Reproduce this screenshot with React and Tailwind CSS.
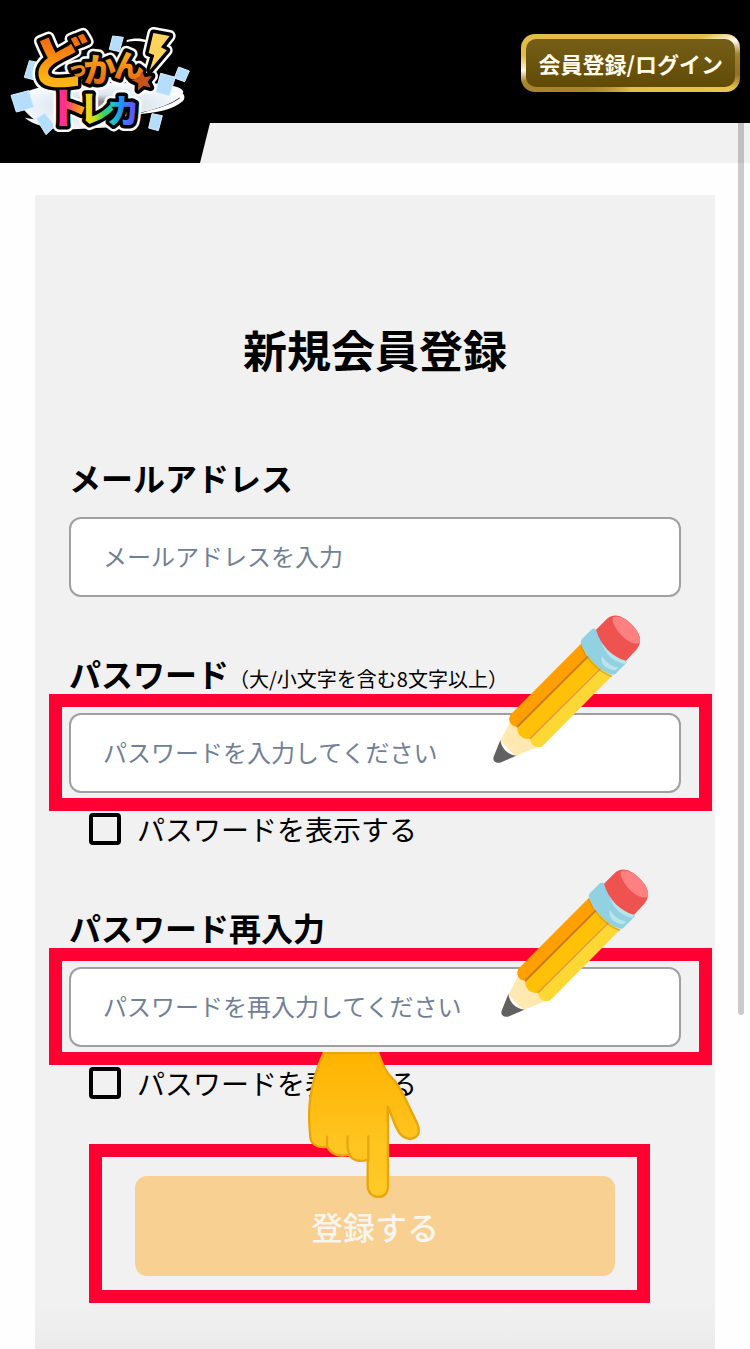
import { useState } from "react";

const Logo = () => (
  <svg
    viewBox="0 0 600 360"
    className="h-[120px] w-[200px] shrink-0 overflow-visible"
    role="img"
    aria-label="どっかん！トレカ"
  >
    <defs>
      <linearGradient id="orange" gradientUnits="userSpaceOnUse" x1="0" y1="45" x2="0" y2="195">
        <stop offset="0.1" stopColor="#f36c10" />
        <stop offset="0.9" stopColor="#ffb414" />
      </linearGradient>
      <linearGradient id="orangeDeep" gradientUnits="userSpaceOnUse" x1="0" y1="100" x2="0" y2="195">
        <stop offset="0.1" stopColor="#fba51b" />
        <stop offset="1" stopColor="#e46412" />
      </linearGradient>
      <linearGradient id="rainbow" gradientUnits="userSpaceOnUse" x1="180" y1="0" x2="405" y2="0">
        <stop offset="0.06" stopColor="#ff2f92" />
        <stop offset="0.24" stopColor="#ff8a1c" />
        <stop offset="0.36" stopColor="#ffd21a" />
        <stop offset="0.46" stopColor="#b9ea20" />
        <stop offset="0.58" stopColor="#3fd060" />
        <stop offset="0.7" stopColor="#1bc9c0" />
        <stop offset="0.82" stopColor="#2b8df2" />
        <stop offset="1" stopColor="#6a4dff" />
      </linearGradient>
      <radialGradient id="swirl">
        <stop offset="0.2" stopColor="#8a8d93" />
        <stop offset="0.5" stopColor="#dfe6ef" />
        <stop offset="1" stopColor="#f4f9ff" />
      </radialGradient>
    </defs>
    <path
      d="M50 232 C110 190 180 195 300 190 C430 185 545 190 550 215 C548 240 470 270 410 280 L405 318 L178 330 C110 315 70 280 50 232Z"
      fill="url(#swirl)"
    />
    <path d="M380 60 C410 50 450 56 460 75 C435 64 410 60 380 66Z" fill="#fff" />
    <path d="M74 293 C120 302 160 300 190 300 L190 325 C140 325 100 315 74 293Z" fill="#eef5fc" />
    <path
      d="M505 225 C545 205 562 225 549 243 C520 270 460 280 410 283 C460 268 510 258 540 234 C530 224 520 224 505 225Z"
      fill="#fff"
    />
    <g fill="#b5defc" stroke="#d9efff" strokeWidth="3">
      <path d="M33 226 L86 212 L102 262 L49 276Z" />
      <path d="M88 122 L118 128 L104 180 L73 172Z" />
      <path d="M338 48 L370 52 L358 95 L328 88Z" />
      <path d="M536 141 L568 153 L554 185 L523 174Z" />
      <path d="M482 160 L526 172 L508 228 L467 216Z" />
      <path d="M456 281 L487 287 L475 332 L446 324Z" />
      <path d="M109 296 L134 279 L165 318 L138 344Z" />
    </g>
    <g stroke="#fff" strokeWidth="36" strokeLinejoin="round">
      <use href="#letters" />
      <use href="#marks" />
    </g>
    <g stroke="#000" strokeWidth="21" strokeLinejoin="round">
      <use href="#letters" />
      <use href="#marks" />
    </g>
    <g id="letters" fontFamily="'Noto Sans CJK JP', sans-serif" fontWeight="900">
      <text>
        <tspan x="92" y="188" fontSize="172" fill="url(#orange)">ど</tspan>
        <tspan x="204" y="168" fontSize="58" fill="url(#orangeDeep)">っ</tspan>
        <tspan x="250" y="187" fontSize="98" fill="url(#orangeDeep)">か</tspan>
        <tspan x="340" y="171" fontSize="92" fill="url(#orangeDeep)">ん</tspan>
      </text>
      <text fill="url(#rainbow)">
        <tspan x="140" y="313" fontSize="128">ト</tspan>
        <tspan x="236" y="307" fontSize="110">レ</tspan>
        <tspan x="320" y="310" fontSize="98">カ</tspan>
      </text>
    </g>
    <g id="marks">
      <path d="M460 39 L509 48 L483 82 L500 91 L449 151 L463 105 L446 99 Z" fill="#ffd45e" />
      <path d="M425 154 l9 17 22 -3 -13 17 9 18 -21 -6 -17 14 1 -21 -20 -10 22 -6z" fill="#c4541a" />
    </g>
  </svg>
);

const Pencil = ({ className }) => (
  <svg viewBox="40 44 444 444" aria-hidden="true" className={`pointer-events-none absolute h-[148px] w-[148px] ${className}`}>
    <path d="M91 365 L62 422 L108 467 L172 441 L188 420 L120 350Z" fill="#ffe9b0" />
    <path d="M62 419 C66 445 84 463 110 466 L61 487 C46 490 38 480 42 469Z" fill="#616161" />
    <path d="M304 130 L92 343 C82 362 96 382 116 378 L325 174Z" fill="#ffa000" />
    <path d="M323 165 L112 378 C112 403 127 419 152 416 L366 205Z" fill="#ffc107" />
    <path d="M361 200 L151 413 C151 434 171 447 188 438 L397 226Z" fill="#fdd835" />
    <path d="M325 168 L112 380" stroke="#cf7a1e" strokeWidth="6" />
    <path d="M364 203 L151 415" stroke="#e89a35" strokeWidth="5" />
    <path d="M304 132 C312 165 352 214 397 228" fill="none" stroke="#b98a2a" strokeOpacity="0.5" strokeWidth="5" />
    <path
      d="M349 88 C345 82 339 84 334 89 L307 116 C301 122 304 132 308 139 C325 175 360 211 397 223 C405 225 410 219 415 213 L441 187 L440 178Z"
      fill="#92d1e2"
    />
    <path d="M366 126 C382 151 411 170 442 180 L436 191 C407 187 376 166 366 126Z" fill="#b9e4ea" />
    <path d="M369 169 C379 187 395 196 413 201 C416 207 408 211 398 209 C379 205 362 190 366 171 C367 167 368 166 369 169Z" fill="#b9e4ea" />
    <path d="M349 88 L379 58 C405 31 438 51 461 78 C484 103 488 127 470 148 L439 181 C400 171 363 137 349 88Z" fill="#ef5350" />
    <path d="M401 50 C418 43 442 57 462 79 C479 97 484 114 480 128 C461 135 437 119 420 99 C405 81 394 58 401 50Z" fill="#ff8080" />
  </svg>
);

const PointingHand = () => (
  <svg
    viewBox="55 35 336 438"
    aria-hidden="true"
    className="pointer-events-none absolute -top-[124px] left-[173px] h-[146px] w-[112px]"
  >
    <defs>
      <linearGradient id="skin" x1="0" y1="0" x2="0" y2="1">
        <stop offset="0" stopColor="#ffb300" />
        <stop offset="0.6" stopColor="#ffc41f" />
        <stop offset="1" stopColor="#ffca28" />
      </linearGradient>
    </defs>
    <path
      d="M102 38 H266 C275 65 284 88 303 109 C327 131 341 160 356 194 L383 250 C394 279 383 293 361 296 C340 296 329 281 321 264 C310 240 303 218 295 200 V435 C295 458 284 470 266 470 C247 470 234 456 234 435 V358 C207 368 185 356 178 343 C148 350 124 341 112 319 C84 325 63 310 62 291 C57 245 58 201 62 170 C69 123 83 78 102 38Z"
      fill="url(#skin)"
      stroke="#e9a60c"
      strokeWidth="7"
      strokeLinejoin="round"
    />
    <path
      d="M112 289 V319 M174 288 C173 315 172 332 182 345 M236 288 V362 M294 198 V245"
      fill="none"
      stroke="#e9a60c"
      strokeWidth="7"
      strokeLinecap="round"
    />
  </svg>
);

const Highlight = ({ className }) => (
  <div aria-hidden="true" className={`pointer-events-none absolute border-[13px] border-[#ff0033] ${className}`} />
);

const Field = ({ id, label, note, children, ...inputProps }) => (
  <div className="flex flex-col gap-4">
    <label htmlFor={id} className="text-[32px] leading-[48px] font-bold">
      {label}
      {note && <span className="text-xl font-normal">{note}</span>}
    </label>
    <div className="relative">
      <input
        id={id}
        name={id}
        className="block h-20 w-full rounded-[12px] border-2 border-[#a0a0a0] bg-white px-8 pb-1 text-2xl text-black placeholder:text-[#718096] focus:border-[#e6a23c] focus:outline-none"
        {...inputProps}
      />
      {children}
    </div>
  </div>
);

const PasswordField = ({ pencilClass, ...props }) => {
  const [visible, setVisible] = useState(false);
  const checkboxId = `show-${props.id}`;

  return (
    <div className="flex flex-col gap-5">
      <Field type={visible ? "text" : "password"} {...props}>
        <Highlight className="-top-[19px] -right-[31px] -bottom-[18px] -left-5" />
        <Pencil className={pencilClass} />
      </Field>
      <div className="flex items-center gap-4 px-5 pb-1.5">
        <input
          id={checkboxId}
          type="checkbox"
          checked={visible}
          onChange={(event) => setVisible(event.target.checked)}
          className="h-8 w-8 shrink-0 appearance-none rounded-[4px] border-4 border-black checked:bg-black"
        />
        <label htmlFor={checkboxId} className="text-[28px] leading-8">
          パスワードを表示する
        </label>
      </div>
    </div>
  );
};

const Header = () => (
  <>
    <header className="relative z-10 flex h-[123px] items-start justify-between bg-black pr-[10px]">
      <a href="#" className="pt-5">
        <Logo />
      </a>
      <div className="pt-[34px]">
        <button
          type="button"
          className="flex rounded-[14px] bg-[conic-gradient(#e3bb49_0deg,#e3bb49_70deg,#fffdf0_78deg,#a5842c_85deg,#8f7020_96deg,#e8c34e_104deg,#e3bb49_180deg,#a98528_240deg,#a5842c_260deg,#fff9e6_266deg,#e3bb49_274deg,#e3bb49_360deg)] p-[5px]"
        >
          <span className="flex h-12 items-center rounded-[10px] bg-linear-to-b from-[#755f18] to-[#604a05] px-3 text-[22px] font-bold text-[#fffbea]">
            会員登録/ログイン
          </span>
        </button>
      </div>
    </header>
    <div className="flex h-10 bg-[#f1f1f1]">
      <div className="w-[210px] bg-black [clip-path:polygon(0_0,100%_0,200px_100%,0_100%)]" />
    </div>
  </>
);

const App = () => {
  const [form, setForm] = useState({ email: "", password: "", confirm: "" });

  const handleChange = (event) => {
    const { name, value } = event.target;
    setForm((prev) => ({ ...prev, [name]: value }));
  };

  return (
    <div className="relative bg-[#fefefe] font-['Noto_Sans_CJK_JP',sans-serif] text-black">
      <Header />

      <div className="flex flex-col px-[35px] pt-8">
        <main className="flex flex-col gap-[72px] bg-linear-to-b from-[#f1f1f1] from-96% to-[#ebebeb] px-[34px] pt-[122px] pb-[73px]">
          <h1 className="text-center text-[44px] leading-[64px] font-bold">新規会員登録</h1>

          <form className="flex flex-col gap-[52px]" onSubmit={(event) => event.preventDefault()}>
            <Field
              id="email"
              type="email"
              label="メールアドレス"
              value={form.email}
              onChange={handleChange}
              placeholder="メールアドレスを入力"
            />
            <PasswordField
              id="password"
              label="パスワード"
              note="（大/小文字を含む8文字以上）"
              value={form.password}
              onChange={handleChange}
              placeholder="パスワードを入力してください"
              pencilClass="-top-[98px] right-10"
            />
            <PasswordField
              id="confirm"
              label="パスワード再入力"
              value={form.confirm}
              onChange={handleChange}
              placeholder="パスワードを再入力してください"
              pencilClass="-top-[98px] right-8"
            />

            <div className="flex flex-col px-[66px] pt-[19px]">
              <div className="relative flex">
                <button
                  type="submit"
                  className="h-[100px] grow rounded-[12px] bg-[#f7d092] text-[32px] font-medium text-[#f9f5ef]"
                >
                  登録する
                </button>
                <Highlight className="-top-8 -right-[35px] -bottom-[27px] -left-[46px]" />
                <PointingHand />
              </div>
            </div>
          </form>
        </main>
      </div>

      {/* scroll indicator */}
      <div className="absolute top-[123px] right-1.5 h-[892px] w-1.5 rounded-b-full bg-black/20" />
    </div>
  );
};

export default App;
